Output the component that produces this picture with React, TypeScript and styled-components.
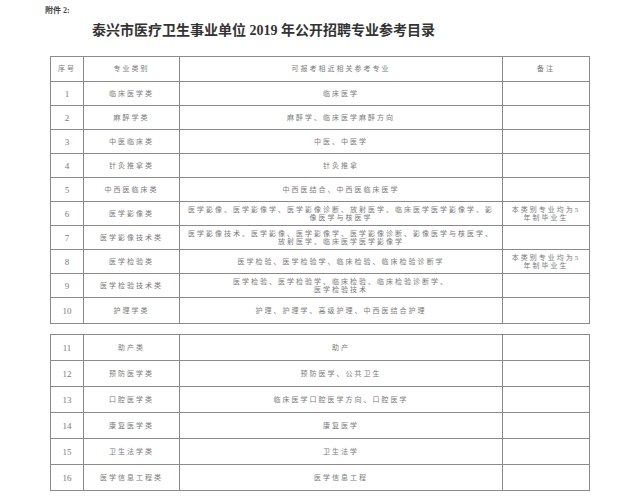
import React from "react";
import styled, { createGlobalStyle } from "styled-components";

const GlobalStyle = createGlobalStyle`
  html, body {
    margin: 0;
    padding: 0;
    background: #fff;
  }
`;

const FONT = `"Liberation Serif", "Noto Sans CJK SC", serif`;
const LINE = "#8a8a8a";
const INK = "#7a7a7a";

interface Major {
  no: number;
  category: string;
  related: string[];
  note?: string[];
}

const FIRST: Major[] = [
  { no: 1, category: "临床医学类", related: ["临床医学"] },
  { no: 2, category: "麻醉学类", related: ["麻醉学、临床医学麻醉方向"] },
  { no: 3, category: "中医临床类", related: ["中医、中医学"] },
  { no: 4, category: "针灸推拿类", related: ["针灸推拿"] },
  { no: 5, category: "中西医临床类", related: ["中西医结合、中西医临床医学"] },
  {
    no: 6,
    category: "医学影像类",
    related: [
      "医学影像、医学影像学、医学影像诊断、放射医学、临床医学医学影像学、影",
      "像医学与核医学",
    ],
    note: ["本类别专业均为5", "年制毕业生"],
  },
  {
    no: 7,
    category: "医学影像技术类",
    related: [
      "医学影像技术、医学影像、医学影像学、医学影像诊断、影像医学与核医学、",
      "放射医学、临床医学医学影像学",
    ],
  },
  {
    no: 8,
    category: "医学检验类",
    related: ["医学检验、医学检验学、临床检验、临床检验诊断学"],
    note: ["本类别专业均为5", "年制毕业生"],
  },
  {
    no: 9,
    category: "医学检验技术类",
    related: ["医学检验、医学检验学、临床检验、临床检验诊断学、", "医学检验技术"],
  },
  { no: 10, category: "护理学类", related: ["护理、护理学、高级护理、中西医结合护理"] },
];

const SECOND: Major[] = [
  { no: 11, category: "助产类", related: ["助产"] },
  { no: 12, category: "预防医学类", related: ["预防医学、公共卫生"] },
  { no: 13, category: "口腔医学类", related: ["临床医学口腔医学方向、口腔医学"] },
  { no: 14, category: "康复医学类", related: ["康复医学"] },
  { no: 15, category: "卫生法学类", related: ["卫生法学"] },
  { no: 16, category: "医学信息工程类", related: ["医学信息工程"] },
];

const COL_WIDTHS = [33, 96, 323, 87];

const Page = styled.div`
  width: 640px;
  height: 496px;
  overflow: hidden;
  font-family: ${FONT};
  color: ${INK};
  padding-top: 6px;
  box-sizing: border-box;
`;

const Attachment = styled.div`
  padding-left: 45px;
  font-size: 8px;
  font-weight: 700;
  color: #444;
  line-height: 10px;
`;

const Title = styled.h1`
  margin: 6px 0 0;
  padding-left: 92px;
  font-size: 14px;
  line-height: 18px;
  font-weight: 700;
  color: #333;
`;

const Sheet = styled.table<{ $top: number }>`
  margin-left: 50px;
  margin-top: ${(p) => p.$top}px;
  width: 539px;
  border-collapse: collapse;
  table-layout: fixed;
  font-size: 7px;
  letter-spacing: 2px;
  line-height: 8px;
`;

const Col = styled.col<{ $w: number }>`
  width: ${(p) => p.$w}px;
`;

const Tr = styled.tr<{ $h: number }>`
  height: ${(p) => p.$h}px;
`;

const Cell = styled.td`
  padding: 0 4px;
  border: 1px solid ${LINE};
  text-align: center;
  vertical-align: middle;
`;

const NumCell = styled(Cell)`
  font-size: 9px;
  letter-spacing: 0;
`;

const Line = styled.div`
  white-space: nowrap;
`;

const Cols = () => (
  <colgroup>
    {COL_WIDTHS.map((w, i) => (
      <Col key={i} $w={w} />
    ))}
  </colgroup>
);

const Lines: React.FC<{ lines?: string[] }> = ({ lines }) => (
  <>
    {lines?.map((l) => (
      <Line key={l}>{l}</Line>
    ))}
  </>
);

const MajorRow: React.FC<{ item: Major; height: number }> = ({ item, height }) => (
  <Tr $h={height}>
    <NumCell>{item.no}</NumCell>
    <Cell>{item.category}</Cell>
    <Cell>
      <Lines lines={item.related} />
    </Cell>
    <Cell>
      <Lines lines={item.note} />
    </Cell>
  </Tr>
);

export default function App() {
  return (
    <>
      <GlobalStyle />
      <Page>
        <Attachment>附件 2:</Attachment>
        <Title>泰兴市医疗卫生事业单位 2019 年公开招聘专业参考目录</Title>
        <Sheet $top={16}>
          <Cols />
          <tbody>
            <Tr $h={25}>
              <Cell>序号</Cell>
              <Cell>专业类别</Cell>
              <Cell>可报考相近相关参考专业</Cell>
              <Cell>备注</Cell>
            </Tr>
            {FIRST.map((m) => (
              <MajorRow key={m.no} item={m} height={m.no === 10 ? 26 : 24} />
            ))}
          </tbody>
        </Sheet>
        <Sheet $top={10}>
          <Cols />
          <tbody>
            {SECOND.map((m) => (
              <MajorRow key={m.no} item={m} height={26} />
            ))}
          </tbody>
        </Sheet>
      </Page>
    </>
  );
}
